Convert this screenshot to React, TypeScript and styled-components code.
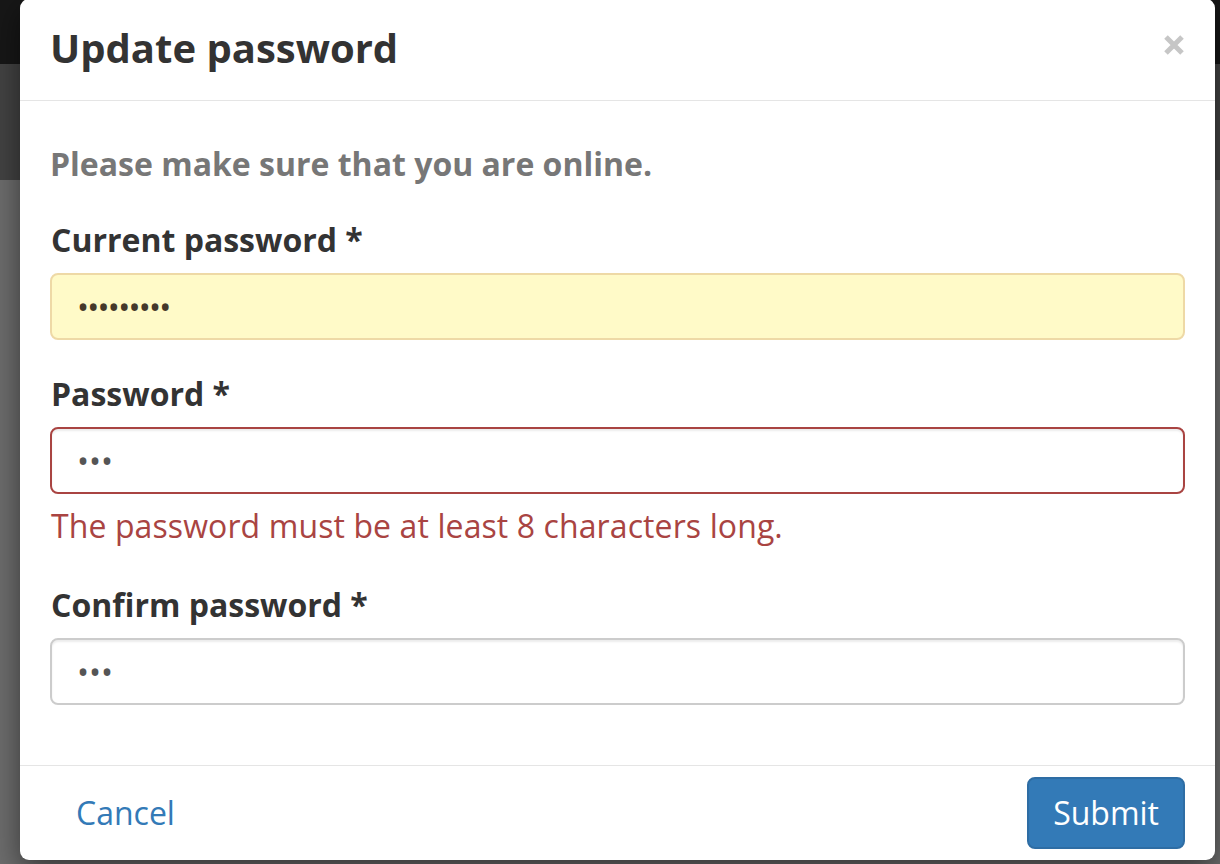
import React from "react";
import styled, { createGlobalStyle } from "styled-components";

const GlobalStyle = createGlobalStyle`
  html, body {
    margin: 0;
    padding: 0;
    width: 1220px;
    height: 864px;
    overflow: hidden;
    font-family: "Open Sans", "Liberation Sans", sans-serif;
  }
  * { box-sizing: border-box; }
`;

const Page = styled.div`
  position: relative;
  width: 1220px;
  height: 864px;
  display: flex;
  flex-direction: column;
  background: #6d6d6d;
`;

const TopBar = styled.div`
  height: 64px;
  background: #171717;
`;

const SubBar = styled.div`
  height: 116px;
  background: #434343;
`;

const Modal = styled.div`
  position: absolute;
  left: 20px;
  top: -1px;
  width: 1195px;
  height: 861px;
  background: #fff;
  border-radius: 9px;
  box-shadow: 0 10px 30px rgba(0, 0, 0, 0.5);
  display: flex;
  flex-direction: column;
`;

const Header = styled.div`
  height: 102px;
  padding: 29px 30px 0 30px;
  border-bottom: 1px solid #e5e5e5;
  display: flex;
  justify-content: space-between;
  align-items: flex-start;
`;

const Title = styled.h4`
  margin: 0;
  font-size: 40px;
  line-height: 40px;
  font-weight: 700;
  color: #333;
`;

const CloseButton = styled.button`
  border: 0;
  background: transparent;
  padding: 0;
  margin: 7px 1px 0 0;
  width: 20px;
  height: 20px;
  display: flex;
  cursor: pointer;
`;

const Body = styled.div`
  padding: 41px 30px 60px 30px;
  border-bottom: 1px solid #e5e5e5;
  display: flex;
  flex-direction: column;
`;

const Intro = styled.p`
  margin: 0 0 32px;
  font-size: 32px;
  line-height: 44px;
  font-weight: 700;
  color: #777;
`;

const FormGroup = styled.div<{ $gap: number }>`
  display: flex;
  flex-direction: column;
  margin-bottom: ${(p) => p.$gap}px;
`;

const Label = styled.label`
  font-size: 32px;
  line-height: 44px;
  font-weight: 700;
  color: #333;
  margin-bottom: 11px;
  padding-left: 1px;
`;

type Variant = "autofill" | "error" | "normal";

const Input = styled.input<{ $variant: Variant }>`
  width: 1135px;
  height: 67px;
  padding: 0 24px 0 25px;
  font-family: "Open Sans", "Liberation Sans", sans-serif;
  font-size: 32px;
  letter-spacing: ${(p) => (p.$variant === "autofill" ? "-1.75px" : "0")};
  border-radius: 8px;
  outline: none;
  border: 2px solid
    ${(p) =>
      p.$variant === "autofill" ? "#eed9a6" : p.$variant === "error" ? "#a94442" : "#cccccc"};
  background: ${(p) => (p.$variant === "autofill" ? "#fffac8" : "#fff")};
  color: ${(p) => (p.$variant === "autofill" ? "#45382a" : "#555")};
  box-shadow: ${(p) => (p.$variant === "autofill" ? "none" : "inset 0 2px 2px rgba(0,0,0,0.075)")};
`;

const HelpBlock = styled.span`
  margin-top: 10px;
  padding-left: 1px;
  font-size: 32px;
  line-height: 44px;
  letter-spacing: 0.1px;
  color: #a94442;
`;

const Footer = styled.div`
  padding: 11px 30px 10px 30px;
  display: flex;
  justify-content: space-between;
  align-items: center;
`;

const Button = styled.button<{ $primary?: boolean }>`
  font-family: "Open Sans", "Liberation Sans", sans-serif;
  font-size: 32px;
  line-height: 44px;
  padding: 12px 24px;
  border-radius: 8px;
  border: 2px solid ${(p) => (p.$primary ? "#2e6da4" : "transparent")};
  background: ${(p) => (p.$primary ? "#337ab7" : "transparent")};
  color: ${(p) => (p.$primary ? "#fff" : "#337ab7")};
  cursor: pointer;
`;

const CloseIcon = () => (
  <svg width="20" height="20" viewBox="0 0 20 20">
    <path d="M2 2 L18 18 M18 2 L2 18" stroke="#c6c6c6" strokeWidth="5" fill="none" />
  </svg>
);

export default function App() {
  return (
    <>
      <GlobalStyle />
      <Page>
        <TopBar />
        <SubBar />
        <Modal>
          <Header>
            <Title>Update password</Title>
            <CloseButton aria-label="Close">
              <CloseIcon />
            </CloseButton>
          </Header>
          <Body>
            <Intro>Please make sure that you are online.</Intro>
            <FormGroup $gap={32}>
              <Label>Current password *</Label>
              <Input $variant="autofill" type="password" value="secret12x" readOnly />
            </FormGroup>
            <FormGroup $gap={35}>
              <Label>Password *</Label>
              <Input $variant="error" type="password" value="abc" readOnly />
              <HelpBlock>The password must be at least 8 characters long.</HelpBlock>
            </FormGroup>
            <FormGroup $gap={0}>
              <Label>Confirm password *</Label>
              <Input $variant="normal" type="password" value="abc" readOnly />
            </FormGroup>
          </Body>
          <Footer>
            <Button>Cancel</Button>
            <Button $primary>Submit</Button>
          </Footer>
        </Modal>
      </Page>
    </>
  );
}
